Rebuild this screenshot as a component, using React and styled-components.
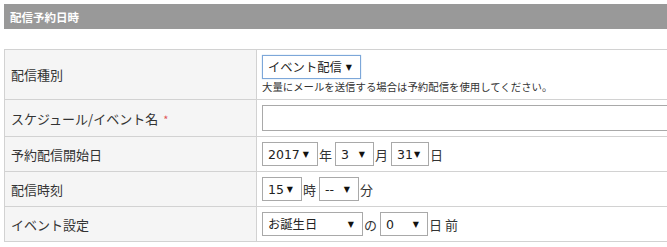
import React from 'react';
import styled, { createGlobalStyle } from 'styled-components';

const GlobalStyle = createGlobalStyle`
  body {
    margin: 0;
    overflow: hidden;
    background: #fff;
    font-family: "DejaVu Sans", "Noto Sans CJK JP", sans-serif;
    color: #333;
  }
`

const Page = styled.div`
  width: 720px;
  padding: 4px 0 0 4px;
`

const SectionTitle = styled.h2`
  margin: 0;
  height: 25px;
  display: flex;
  align-items: center;
  padding-left: 6px;
  background: #999;
  color: #fff;
  font-family: "Noto Sans CJK JP", sans-serif;
  font-size: 11.5px;
  font-weight: bold;
`

const FormTable = styled.table`
  margin-top: 20px;
  width: 100%;
  border-collapse: collapse;
  border: 1px solid #d2d2d2;
`

const Label = styled.th`
  width: 239px;
  padding: 0 6px;
  background: #f5f5f5;
  border: 1px solid #d2d2d2;
  text-align: left;
  font-family: "Noto Sans CJK JP", sans-serif;
  font-size: 13px;
  font-weight: normal;
  color: #333;
`

const Required = styled.span`
  color: #e05555;
  margin-left: 5px;
  font-size: 11px;
`

const Value = styled.td`
  padding: 5px 5px;
  border: 1px solid #d2d2d2;
`

const Line = styled.div`
  display: flex;
  align-items: center;
  font-family: "Noto Sans CJK JP", sans-serif;
  font-size: 13px;
  color: #333;
`

const Unit = styled.span`
  margin: 0 3px 0 1px;
`

const FakeSelect = styled.span`
  box-sizing: border-box;
  display: inline-flex;
  align-items: center;
  justify-content: space-between;
  width: ${({ w }) => w}px;
  height: 24px;
  padding: 0 8px 0 5px;
  border: 1px solid ${({ focused }) => (focused ? '#7da7d9' : '#a9a9a9')};
  box-shadow: ${({ focused }) => (focused ? '0 0 1px #9cc0e8' : 'none')};
  background: #fff;
  font-family: "DejaVu Sans", "Noto Sans CJK JP", sans-serif;
  font-size: ${({ jp }) => (jp ? '12.3px' : '12.5px')};
  color: #222;
`

const Arrow = styled.span`
  font-size: 8px;
  color: #111;
`

const Note = styled.div`
  margin-top: 1px;
  font-family: "Noto Sans CJK JP", sans-serif;
  font-size: 10.4px;
  line-height: 14px;
  color: #333;
`

const TextInput = styled.input`
  box-sizing: border-box;
  display: block;
  width: 100%;
  height: 26px;
  border: 1px solid #a9a9a9;
  margin: 0;
  padding: 0 4px;
`

const Select = ({ value, w, focused, jp }) => (
  <FakeSelect w={w} focused={focused} jp={jp}>
    <span>{value}</span>
    <Arrow>▼</Arrow>
  </FakeSelect>
)

export default function App() {
  return (
    <Page>
      <GlobalStyle />
      <SectionTitle>配信予約日時</SectionTitle>
      <FormTable>
        <tbody>
          <tr>
            <Label>配信種別</Label>
            <Value>
              <Line>
                <Select value="イベント配信" w={99} focused jp />
              </Line>
              <Note>大量にメールを送信する場合は予約配信を使用してください。</Note>
            </Value>
          </tr>
          <tr>
            <Label>
              スケジュール/イベント名<Required>*</Required>
            </Label>
            <Value>
              <TextInput type="text" />
            </Value>
          </tr>
          <tr>
            <Label>予約配信開始日</Label>
            <Value>
              <Line>
                <Select value="2017" w={56} />
                <Unit>年</Unit>
                <Select value="3" w={39} />
                <Unit>月</Unit>
                <Select value="31" w={38} />
                <Unit>日</Unit>
              </Line>
            </Value>
          </tr>
          <tr>
            <Label>配信時刻</Label>
            <Value>
              <Line>
                <Select value="15" w={40} />
                <Unit>時</Unit>
                <Select value="--" w={40} />
                <Unit>分</Unit>
              </Line>
            </Value>
          </tr>
          <tr>
            <Label>イベント設定</Label>
            <Value>
              <Line>
                <Select value="お誕生日" w={101} jp />
                <Unit>の</Unit>
                <Select value="0" w={48} />
                <Unit>日 前</Unit>
              </Line>
            </Value>
          </tr>
        </tbody>
      </FormTable>
    </Page>
  )
}
